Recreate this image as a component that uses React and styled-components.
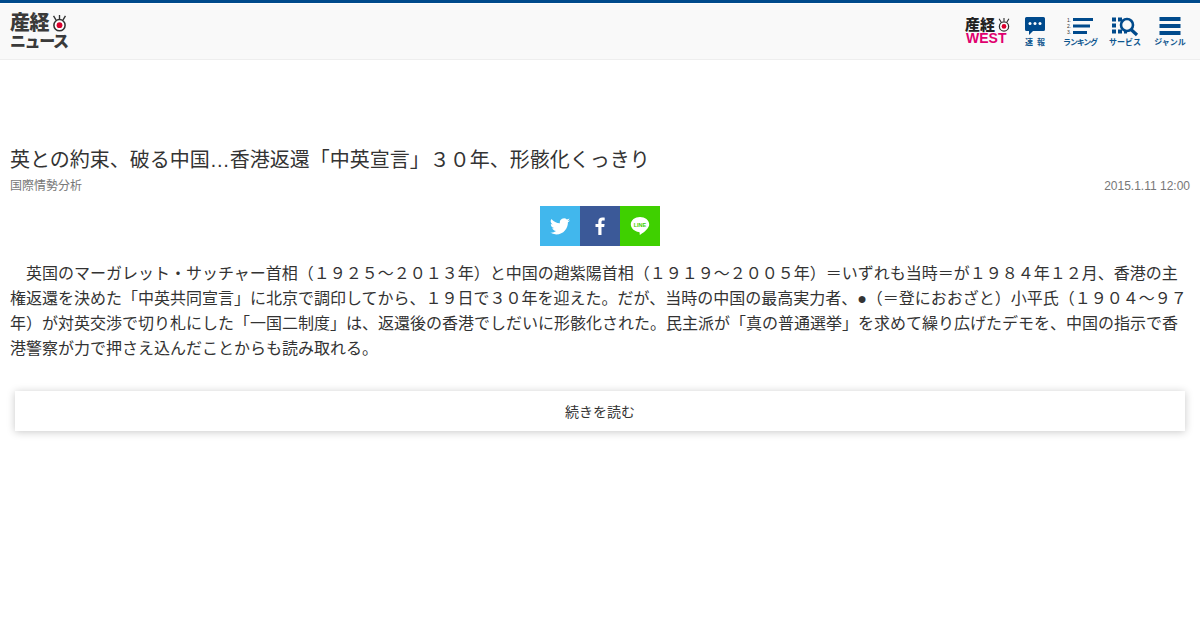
import React from "react";
import styled, { createGlobalStyle } from "styled-components";

const Global = createGlobalStyle`
  html, body { margin: 0; padding: 0; background: #fff; }
  body { font-family: "Liberation Sans", "Noto Sans CJK JP", sans-serif; color: #333; }
`;
const Page = styled.div`width: 1200px; height: 630px; overflow: hidden; background: #fff;`;
const Header = styled.header`
  box-sizing: border-box; height: 60px; background: #f9f9f9;
  border-top: 3px solid #004a8c; border-bottom: 1px solid #eee;
  box-shadow: inset 0 1px 0 #fff;
  display: flex; justify-content: space-between; align-items: flex-start;
  padding: 0 14px 0 10px;
`;
const Logo = styled.div`
  display: flex; flex-direction: column; width: 60px; margin-top: 9px;
  color: #3a3a3a; font-weight: 900; line-height: 1;
`;
const LogoTop = styled.div`display: flex; align-items: center; font-size: 20px; letter-spacing: -0.5px; height: 22px;`;
const LogoBottom = styled.div`font-size: 16px; letter-spacing: -1.4px; height: 17px; line-height: 17px; white-space: nowrap; margin-top: -1px;`;
const Nav = styled.nav`display: flex; align-items: flex-start;`;
const NavItem = styled.div`
  width: ${p => p.$w}px; margin-right: ${p => p.$mr || 0}px; display: flex; flex-direction: column; align-items: center;
  margin-top: 13px; color: #004a8c;
`;
const NavIcon = styled.svg`display: block; width: ${p => p.$w}px; height: 22px;`;
const NavLabel = styled.span`
  font-size: 8px; line-height: 10px; font-weight: 700; color: #0e568f;
  white-space: nowrap; letter-spacing: ${p => p.$ls || 0}px; margin-right: ${p => p.$ls > 0 ? -p.$ls : 0}px;
`;
const West = styled.div`
  width: 45px; margin-right: 14px; margin-top: 14px; display: flex; flex-direction: column;
  align-items: flex-start; font-weight: 900; line-height: 1;
`;
const WestTop = styled.div`display: flex; align-items: center; font-size: 15px; color: #222; height: 15px; white-space: nowrap;`;
const WestBottom = styled.div`font-size: 14px; color: #e0006f; font-family: "Liberation Sans", sans-serif; font-weight: 700; height: 13px; line-height: 13px; margin-left: 1px;`;
const Main = styled.main`padding: 86px 10px 0;`;
const Title = styled.h1`margin: 0; font-size: 20px; line-height: 28px; font-weight: 400; color: #333; white-space: nowrap;`;
const Meta = styled.div`
  display: flex; justify-content: space-between; font-size: 12px; line-height: 16px;
  color: #777; margin-top: 4px;
`;
const Share = styled.div`display: flex; justify-content: center; margin-top: 12px;`;
const ShareBtn = styled.div`
  width: 40px; height: 40px; background: ${p => p.$bg};
  display: flex; align-items: center; justify-content: center;
`;
const Body = styled.p`margin: 15px 0 0; font-size: 16px; line-height: 25px; color: #333;`;
const More = styled.div`
  margin: 30px 5px 0; height: 40px; padding-bottom: 1px; box-sizing: border-box; background: #fff;
  display: flex; align-items: center; justify-content: center;
  font-size: 14px; color: #333; box-shadow: 0 1px 8px rgba(0,0,0,.22);
`;

const Eye = ({ w, gap }) => (
  <svg width={w} height={w} viewBox="0 0 20 20" style={{ marginLeft: gap, flex: "none" }}>
    <path d="M3 1l3 5M10 0v5M17 1l-3 5" stroke="#333" strokeWidth="1.6" fill="none" />
    <circle cx="10" cy="12" r="6.6" fill="#fff" stroke="#333" strokeWidth="1.8" />
    <circle cx="10" cy="12" r="3.4" fill="#d9002c" />
  </svg>
);

export default function App() {
  return (
    <Page>
      <Global />
      <Header>
        <Logo>
          <LogoTop>産経<Eye w={17} gap={2} /></LogoTop>
          <LogoBottom>ニュース</LogoBottom>
        </Logo>
        <Nav>
          <West>
            <WestTop>産経<Eye w={14} gap={2} /></WestTop>
            <WestBottom>WEST</WestBottom>
          </West>
          <NavItem $w={22} $mr={16}>
            <NavIcon viewBox="0 0 22 22" $w={22}>
              <path d="M2.500 1h17A1.500 1.500 0 0 1 21 2.500v11a1.500 1.500 0 0 1-1.500 1.500H9l-4 4v-4H2.500A1.500 1.500 0 0 1 1 13.500v-11A1.500 1.500 0 0 1 2.500 1z" fill="#004a8c" />
              <circle cx="6" cy="7.500" r="1.500" fill="#fff" /><circle cx="11" cy="7.500" r="1.500" fill="#fff" /><circle cx="16" cy="7.500" r="1.500" fill="#fff" />
            </NavIcon>
            <NavLabel $ls={4}>速報</NavLabel>
          </NavItem>
          <NavItem $w={36} $mr={11}>
            <NavIcon viewBox="0 0 36 22" $w={36}>
              <text x="5" y="6" fontSize="5" fill="#333" fontFamily="Liberation Sans">1.</text>
              <text x="5" y="12" fontSize="5" fill="#333" fontFamily="Liberation Sans">2.</text>
              <text x="5" y="18" fontSize="5" fill="#333" fontFamily="Liberation Sans">3.</text>
              <rect x="11" y="2" width="20" height="3" fill="#004a8c" />
              <rect x="11" y="8.500" width="17" height="3" fill="#004a8c" />
              <rect x="11" y="15" width="14" height="3" fill="#004a8c" />
            </NavIcon>
            <NavLabel $ls={-1.2}>ランキング</NavLabel>
          </NavItem>
          <NavItem $w={32} $mr={13}>
            <NavIcon viewBox="0 0 32 22" $w={32}>
              <g fill="#004a8c">
                <rect x="3" y="1.500" width="4" height="4" /><rect x="9" y="1.500" width="4" height="4" />
                <rect x="3" y="7.500" width="4" height="4" /><rect x="3" y="13.500" width="4" height="4" />
                <rect x="9" y="13.500" width="4" height="4" /><rect x="15" y="15" width="3" height="2.500" />
              </g>
              <circle cx="18" cy="9" r="6" fill="none" stroke="#004a8c" strokeWidth="2.600" />
              <path d="M22 13.500l6 5.500" stroke="#004a8c" strokeWidth="3.200" />
            </NavIcon>
            <NavLabel>サービス</NavLabel>
          </NavItem>
          <NavItem $w={32}>
            <NavIcon viewBox="0 0 32 22" $w={32}>
              <rect x="5.500" y="1" width="21" height="4" fill="#004a8c" />
              <rect x="5.500" y="8" width="21" height="4" fill="#004a8c" />
              <rect x="5.500" y="15" width="21" height="4" fill="#004a8c" />
            </NavIcon>
            <NavLabel>ジャンル</NavLabel>
          </NavItem>
        </Nav>
      </Header>
      <Main>
        <Title>英との約束、破る中国…香港返還「中英宣言」３０年、形骸化くっきり</Title>
        <Meta><span>国際情勢分析</span><span>2015.1.11 12:00</span></Meta>
        <Share>
          <ShareBtn $bg="#41b7ed">
            <svg width="20" height="17" viewBox="0 0 24 20">
              <path fill="#fff" d="M24 2.400a9.800 9.800 0 0 1-2.800.8 4.900 4.900 0 0 0 2.200-2.700 9.800 9.800 0 0 1-3.100 1.200A4.900 4.900 0 0 0 11.900 6.100 14 14 0 0 1 1.700.9a4.900 4.900 0 0 0 1.500 6.600 4.900 4.900 0 0 1-2.200-.6v.1a4.900 4.900 0 0 0 3.900 4.800 4.900 4.900 0 0 1-2.200.1 4.900 4.900 0 0 0 4.600 3.400A9.900 9.900 0 0 1 0 17.300 14 14 0 0 0 7.500 19.500c9.100 0 14-7.500 14-14v-.6A10 10 0 0 0 24 2.400z" />
            </svg>
          </ShareBtn>
          <ShareBtn $bg="#3b5998">
            <svg width="10" height="18" viewBox="0 0 10 18">
              <path fill="#fff" d="M6.500 18V10h2.700l.4-3.100H6.500V5c0-.9.300-1.500 1.500-1.500h1.700V.7C9.400.700 8.400.6 7.300.6 4.900.6 3.300 2 3.300 4.700v2.200H.5V10h2.800v8z" />
            </svg>
          </ShareBtn>
          <ShareBtn $bg="#3fd000">
            <svg width="20" height="20" viewBox="0 0 20 20">
              <path fill="#fff" d="M10 1c5 0 9.200 3.200 9.200 7.300 0 3.800-4.500 7.700-9 10.400-.6.300-.6-.4-.5-1.200.1-.8 0-1.300-.9-1.500C4.400 15.500.8 12.300.8 8.300.8 4.200 5 1 10 1z" />
              <text x="10" y="10.500" textAnchor="middle" fontSize="5.500" fontWeight="700" fill="#3fd000" fontFamily="Liberation Sans">LINE</text>
            </svg>
          </ShareBtn>
        </Share>
        <Body>　英国のマーガレット・サッチャー首相（１９２５～２０１３年）と中国の趙紫陽首相（１９１９～２００５年）＝いずれも当時＝が１９８４年１２月、香港の主権返還を決めた「中英共同宣言」に北京で調印してから、１９日で３０年を迎えた。だが、当時の中国の最高実力者、●（＝登におおざと）小平氏（１９０４～９７年）が対英交渉で切り札にした「一国二制度」は、返還後の香港でしだいに形骸化された。民主派が「真の普通選挙」を求めて繰り広げたデモを、中国の指示で香港警察が力で押さえ込んだことからも読み取れる。</Body>
        <More>続きを読む</More>
      </Main>
    </Page>
  );
}
